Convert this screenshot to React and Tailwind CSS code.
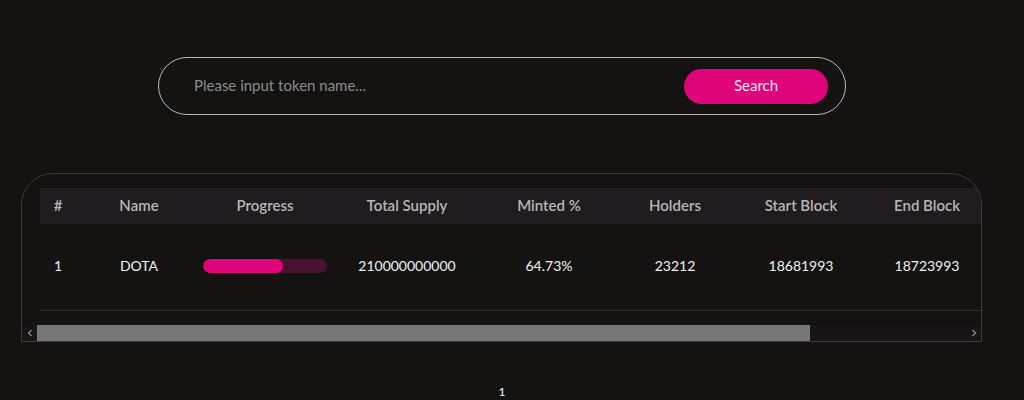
import React from "react";

const columns = [
    { key: "idx", label: "#", width: "w-[36px]" },
    { key: "name", label: "Name", width: "w-[126px]" },
    { key: "progress", label: "Progress", width: "w-[126px]" },
    { key: "supply", label: "Total Supply", width: "w-[158px]" },
    { key: "minted", label: "Minted %", width: "w-[126px]" },
    { key: "holders", label: "Holders", width: "w-[126px]" },
    { key: "start", label: "Start Block", width: "w-[126px]" },
    { key: "end", label: "End Block", width: "w-[126px]" },
];

const tokens = [
    {
        idx: 1,
        name: "DOTA",
        progress: 64.73,
        supply: "210000000000",
        minted: "64.73%",
        holders: "23212",
        start: "18681993",
        end: "18723993",
    },
];

function ProgressBar({ value }) {
    return (
        <div className="w-[124px] h-[14px] rounded-full bg-[#47132f] overflow-hidden">
            <div className="h-full rounded-full bg-[#df0479]" style={{ width: `${value}%` }} />
        </div>
    );
}

function Arrow({ dir }) {
    return (
        <svg width="6" height="8" viewBox="0 0 6 8" className="text-[#8a8a8a]">
            <path
                d={dir === "left" ? "M4.5 1 L1.5 4 L4.5 7" : "M1.5 1 L4.5 4 L1.5 7"}
                fill="none"
                stroke="currentColor"
                strokeWidth="1.4"
            />
        </svg>
    );
}

export default function App() {
    return (
        <div className="min-h-[400px] bg-[#141312] text-white font-['Lato',sans-serif] overflow-hidden">
            <div className="w-[1004px]">
                {/* search */}
                <div className="flex justify-center pt-[57px]">
                    <div className="w-[688px] h-[58px] flex items-center justify-between rounded-full border border-[#b9b9b9] pl-[35px] pr-[17px]">
                        <input
                            className="bg-transparent outline-none text-[15px] text-[#d0d0d0] placeholder:text-[#8c8c8c] w-[420px] -mt-[2px]"
                            placeholder="Please input token name..."
                        />
                        <button className="w-[144px] h-[35px] rounded-full bg-[#df0479] text-[15px] text-[#f3e6ee] pb-[2px]">
                            Search
                        </button>
                    </div>
                </div>

                {/* table */}
                <div className="mt-[58px] ml-[21px] w-[961px] h-[169px] border border-[#3c3a3a] rounded-t-[32px] overflow-hidden flex flex-col">
                    <div className="flex-1 pt-[14px] pl-[18px] overflow-hidden">
                        <div className="w-[1150px]">
                            <div className="flex h-[36px] items-center bg-[#201c20] text-[15px] font-semibold text-[#b9b6b6] pb-[1px]">
                                {columns.map((c) => (
                                    <div key={c.key} className={`${c.width} text-center shrink-0`}>
                                        {c.label}
                                    </div>
                                ))}
                            </div>
                            {tokens.map((t) => (
                                <div key={t.idx} className="flex h-[87px] items-center border-b border-[#2e2b2b] text-[14px] text-[#f2f2f2] pb-[3px]">
                                    <div className="w-[36px] text-center shrink-0">{t.idx}</div>
                                    <div className="w-[126px] text-center shrink-0">{t.name}</div>
                                    <div className="w-[126px] shrink-0 flex justify-center pt-[1px]">
                                        <ProgressBar value={t.progress} />
                                    </div>
                                    <div className="w-[158px] text-center shrink-0">{t.supply}</div>
                                    <div className="w-[126px] text-center shrink-0">{t.minted}</div>
                                    <div className="w-[126px] text-center shrink-0">{t.holders}</div>
                                    <div className="w-[126px] text-center shrink-0">{t.start}</div>
                                    <div className="w-[126px] text-center shrink-0">{t.end}</div>
                                </div>
                            ))}
                        </div>
                    </div>
                    {/* scrollbar */}
                    <div className="h-[16px] flex items-stretch bg-[#171515] shrink-0">
                        <div className="w-[15px] flex items-center justify-center">
                            <Arrow dir="left" />
                        </div>
                        <div className="flex-1 flex">
                            <div className="w-[773px] bg-[#777676]" />
                        </div>
                        <div className="w-[15px] flex items-center justify-center">
                            <Arrow dir="right" />
                        </div>
                    </div>
                </div>

                {/* pagination */}
                <div className="flex justify-center pt-[41px]">
                    <span className="text-[12px] text-white">1</span>
                </div>
            </div>
        </div>
    );
}
